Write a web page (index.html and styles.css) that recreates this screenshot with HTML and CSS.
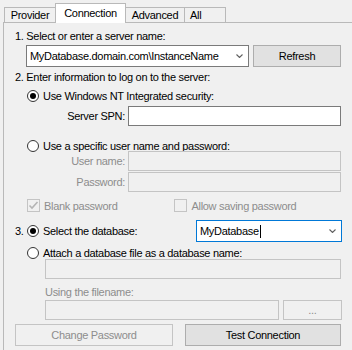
FILE: index.html
```html
<!DOCTYPE html>
<html lang="en">
<head>
    <meta charset="UTF-8">
    <title>Connection Properties</title>
    <link rel="stylesheet" href="styles.css">
</head>
<body>
    <div class="tabs">
        <div class="tab tab-provider">Provider</div>
        <div class="tab tab-connection active">Connection</div>
        <div class="tab tab-advanced">Advanced</div>
        <div class="tab tab-all">All</div>
    </div>

    <div class="panel">
        <div class="step step-1">1. Select or enter a server name:</div>
        <div class="server-row">
            <div class="combo combo-server">
                <span class="combo-text">MyDatabase.domain.com\InstanceName</span>
                <svg class="combo-arrow" width="7" height="4" viewBox="0 0 7 4"><polyline points="0.5,0.5 3.5,3.5 6.5,0.5" fill="none" stroke="#606060" stroke-width="1.1"/></svg>
            </div>
            <div class="btn btn-refresh">Refresh</div>
        </div>

        <div class="step step-2">2. Enter information to log on to the server:</div>
        <div class="option option-nt">
            <span class="radio checked"></span>
            <span>Use Windows NT Integrated security:</span>
        </div>
        <div class="field-row field-spn">
            <span class="field-label">Server SPN:</span>
            <div class="textbox"></div>
        </div>
        <div class="option option-specific">
            <span class="radio"></span>
            <span>Use a specific user name and password:</span>
        </div>
        <div class="field-row field-user">
            <span class="field-label disabled">User name:</span>
            <div class="textbox disabled"></div>
        </div>
        <div class="field-row field-pass">
            <span class="field-label disabled">Password:</span>
            <div class="textbox disabled"></div>
        </div>
        <div class="check-row">
            <div class="check-item">
                <span class="checkbox checked">
                    <svg width="11" height="11" viewBox="0 0 11 11"><polyline points="1.5,5.5 4,8 9.5,2" fill="none" stroke="#b4b4b4" stroke-width="1.6"/></svg>
                </span>
                <span class="disabled">Blank password</span>
            </div>
            <div class="check-item check-allow">
                <span class="checkbox"></span>
                <span class="disabled">Allow saving password</span>
            </div>
        </div>

        <div class="db-row">
            <span class="step-num">3.</span>
            <span class="radio checked"></span>
            <span class="db-label">Select the database:</span>
            <div class="combo combo-db focused">
                <span class="combo-text">MyDatabase<span class="caret"></span></span>
                <svg class="combo-arrow" width="7" height="4" viewBox="0 0 7 4"><polyline points="0.5,0.5 3.5,3.5 6.5,0.5" fill="none" stroke="#606060" stroke-width="1.1"/></svg>
            </div>
        </div>
        <div class="option option-attach">
            <span class="radio"></span>
            <span>Attach a database file as a database name:</span>
        </div>
        <div class="textbox disabled box-dbname"></div>
        <div class="sub-label disabled">Using the filename:</div>
        <div class="file-row">
            <div class="textbox disabled box-file"></div>
            <div class="btn disabled btn-browse">...</div>
        </div>

        <div class="button-row">
            <div class="btn disabled btn-change">Change Password</div>
            <div class="btn btn-test">Test Connection</div>
        </div>
    </div>
</body>
</html>
```

FILE: styles.css
```css
body {
    margin: 0;
    width: 352px;
    height: 350px;
    overflow: hidden;
    background: #f0f0f0;
    font-family: "Liberation Sans", Arial, sans-serif;
    font-size: 11px;
    letter-spacing: -0.3px;
    color: #000;
}

/* tab strip */
.tabs {
    display: flex;
    align-items: flex-end;
    height: 22px;
    padding-left: 4px;
    position: relative;
    z-index: 1;
}
.tab {
    box-sizing: border-box;
    height: 15px;
    line-height: 14px;
    border: 1px solid #b9b9b9;
    border-bottom: none;
    margin-left: -1px;
    text-align: center;
    background: #f0f0f0;
}
.tab-provider { width: 52px; margin-left: 0; }
.tab-connection { width: 71px; }
.tab-advanced { width: 60px; }
.tab-all { width: 42px; text-align: left; padding-left: 5px; }
.tab.active {
    height: 20px;
    line-height: 18px;
    margin-bottom: -1px;
    background: #fff;
    position: relative;
}

/* page */
.panel {
    margin-left: 3px;
    border-top: 1px solid #b9b9b9;
    border-left: 1px solid #b9b9b9;
    padding-left: 11px;
    height: 330px;
}
.step {
    height: 13px;
    line-height: 13px;
}
.step-1 { margin-top: 7px; }
.step-2 { margin-top: 4px; }

.server-row {
    display: flex;
    gap: 4px;
    margin-top: 2px;
    padding-left: 11px;
}

.combo {
    box-sizing: border-box;
    display: flex;
    align-items: center;
    background: #fff;
    border: 1px solid #7a7a7a;
    padding: 0 5px 0 3px;
}
.combo-text { flex: 1; white-space: nowrap; overflow: hidden; }
.combo-server { width: 223px; height: 22px; }
.combo-db { width: 146px; height: 22px; margin-left: auto; }
.combo.focused { border-color: #0078d7; }
.caret {
    display: inline-block;
    width: 1px;
    height: 13px;
    margin-left: 1px;
    background: #000;
    vertical-align: -3px;
}

.btn {
    box-sizing: border-box;
    display: flex;
    align-items: center;
    justify-content: center;
    background: #e1e1e1;
    border: 1px solid #adadad;
}
.btn.disabled {
    background: #f0f0f0;
    border-color: #c4c4c4;
    color: #8d8d8d;
}
.btn-refresh { width: 88px; height: 22px; }

.option {
    display: flex;
    align-items: center;
    gap: 4px;
    height: 13px;
    padding-left: 12px;
}
.option-nt { margin-top: 5px; }
.option-specific { margin-top: 13px; }
.option-attach { margin-top: 4px; }

.radio {
    box-sizing: border-box;
    display: flex;
    align-items: center;
    justify-content: center;
    width: 12px;
    height: 12px;
    border: 1px solid #333;
    border-radius: 50%;
    background: #fff;
}
.radio.checked::after {
    content: "";
    width: 6px;
    height: 6px;
    border-radius: 50%;
    background: #000;
}

.field-row {
    display: flex;
    align-items: center;
    gap: 3px;
}
.field-label {
    width: 110px;
    text-align: right;
}
.field-spn { margin-top: 4px; }
.field-user { margin-top: -1px; }
.field-pass { margin-top: 1px; }

.textbox {
    box-sizing: border-box;
    width: 213px;
    height: 20px;
    background: #fff;
    border: 1px solid #7a7a7a;
}
.textbox.disabled {
    background: #f0f0f0;
    border-color: #c4c4c4;
}
.disabled { color: #8d8d8d; }

.check-row {
    display: flex;
    height: 13px;
    margin-top: 7px;
    padding-left: 12px;
}
.check-item {
    display: flex;
    align-items: center;
    gap: 4px;
}
.check-allow { margin-left: 57px; }
.checkbox {
    box-sizing: border-box;
    display: flex;
    align-items: center;
    justify-content: center;
    width: 13px;
    height: 13px;
    border: 1px solid #c4c4c4;
    background: #f0f0f0;
}

.db-row {
    display: flex;
    align-items: center;
    width: 327px;
    margin-top: 8px;
}
.step-num { width: 12px; }
.db-label { margin-left: 4px; }

.box-dbname {
    width: 296px;
    margin: 0 0 0 30px;
}
.sub-label {
    height: 13px;
    line-height: 13px;
    margin-top: 7px;
    padding-left: 30px;
}
.file-row {
    display: flex;
    gap: 4px;
    margin-top: 1px;
    padding-left: 30px;
}
.box-file { width: 234px; }
.btn-browse { width: 59px; height: 20px; }

.button-row {
    display: flex;
    justify-content: space-between;
    width: 326px;
    margin-top: 4px;
}
.btn-change { width: 158px; height: 22px; }
.btn-test { width: 156px; height: 22px; }
```
